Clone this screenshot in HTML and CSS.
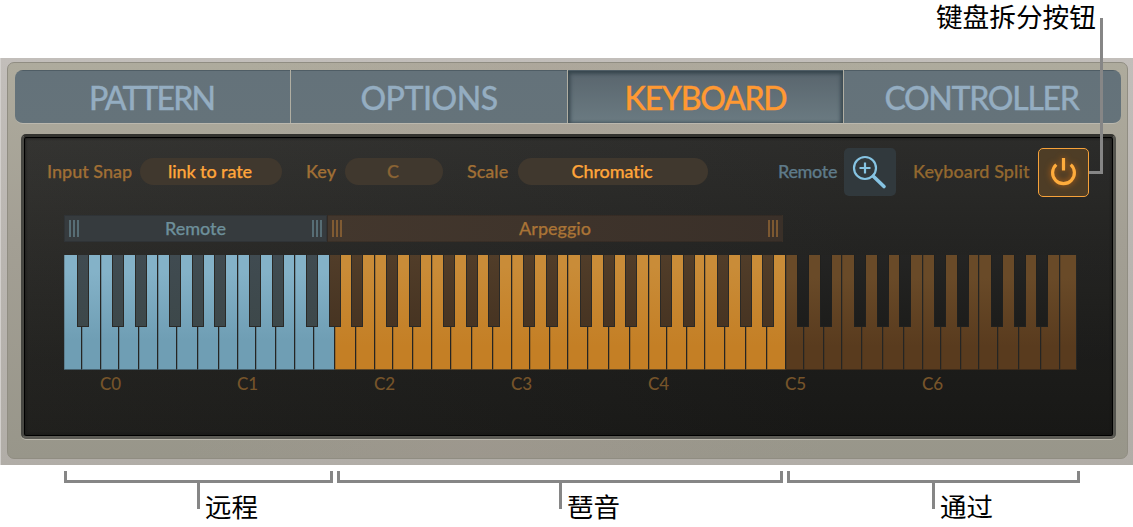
FILE: index.html
```
<!DOCTYPE html>
<html lang="zh-CN">
<head>
    <meta charset="UTF-8">
    <meta name="viewport" content="width=device-width, initial-scale=1.0">
    <title>Arpeggiator - Keyboard</title>
    <link rel="stylesheet" href="styles.css">
</head>
<body>
    <header class="top-note">键盘拆分按钮</header>

    <main class="plugin">
        <div class="panel">
            <nav class="tabs">
                <a class="tab pattern">PATTERN</a>
                <a class="tab options">OPTIONS</a>
                <a class="tab keyboard-tab active">KEYBOARD</a>
                <a class="tab controller">CONTROLLER</a>
            </nav>

            <section class="screen">
                <div class="controls">
                    <span class="label snap">Input Snap</span>
                    <span class="value rate on">link to rate</span>
                    <span class="label key-label">Key</span>
                    <span class="value key-value">C</span>
                    <span class="label scale">Scale</span>
                    <span class="value chromatic on">Chromatic</span>
                    <span class="label remote">Remote</span>
                    <button class="btn btn-zoom">
                        <svg width="52" height="48" viewBox="0 0 52 48" fill="none" stroke="#86c4e3">
                            <circle cx="21" cy="20" r="11" stroke-width="2.200"/>
                            <path d="M21 14.500v11M15.500 20h11" stroke-width="2.200"/>
                            <path d="M29.300 28.200L40 38.500" stroke-width="3.600" stroke-linecap="round"/>
                        </svg>
                    </button>
                    <span class="label split">Keyboard Split</span>
                    <button class="btn btn-power">
                        <svg width="49" height="47" viewBox="0 0 49 47" fill="none" stroke="#ffac3c">
                            <path d="M17.300 15.600A10.900 10.900 0 1 0 31.700 15.600" stroke-width="3.200"/>
                            <path d="M24.500 9v12.500" stroke-width="3.200"/>
                        </svg>
                    </button>
                </div>

                <div class="ranges">
                    <div class="range range-remote"><i class="grip"></i><span>Remote</span><i class="grip"></i></div>
                    <div class="range range-arp"><i class="grip"></i><span>Arpeggio</span><i class="grip"></i></div>
                </div>

                <div class="keys" id="keys"></div>

                <div class="octaves">
                    <span>C0</span><span>C1</span><span>C2</span><span>C3</span><span>C4</span><span>C5</span><span>C6</span>
                </div>
            </section>
        </div>
    </main>

    <footer class="notes">
        <div class="note note-remote"><span>远程</span></div>
        <div class="note note-arp"><span>琶音</span></div>
        <div class="note note-thru"><span>通过</span></div>
    </footer>

    <div class="pointer"></div>

    <script src="keys.js"></script>
</body>
</html>
```
FILE: keys.js
```
// key edges inside one octave, C to C
const OCTAVE = 137;
const whites = [0, 18.5, 38.4, 56.6, 75.7, 96.7, 118.2, 137];
const blacks = [11, 33.5, 68, 91, 113];
const firstC = 37;
const total = 1013;

const keys = document.getElementById('keys');

function zone(x) {
    if (x < 264) return 'remote-key';
    if (x < 721) return 'arp-key';
    return 'thru-key';
}

function addKey(type, left, right) {
    const key = document.createElement('div');
    key.className = type + ' ' + zone(left);
    key.style.width = (right - left) + 'px';
    if (type === 'black') {
        key.style.left = left + 'px';
    }
    keys.appendChild(key);
}

for (let oct = -1; oct < 8; oct++) {
    const start = firstC + oct * OCTAVE;
    for (let i = 0; i < 7; i++) {
        const left = Math.max(start + whites[i], 0);
        const right = Math.min(start + whites[i + 1], total);
        if (right - left > 10 && start + whites[i] > -5) addKey('white', left, right);
    }
    blacks.forEach(function (b) {
        if (start + b > 0 && start + b < total - 20) addKey('black', start + b, start + b + 12);
    });
}
```
FILE: styles.css
```
* {
    box-sizing: border-box;
}
body {
    margin: 0;
    width: 1133px;
    height: 527px;
    position: relative;
    overflow: hidden;
    background: #fff;
    font-family: Lato, "Noto Sans CJK SC", sans-serif;
    font-weight: 500;
    font-variant-ligatures: none;
    display: flex;
    flex-direction: column;
}
.top-note {
    height: 58px;
    padding: 0 37px 0 0;
    text-align: right;
    font: 26.700px/31px "Noto Sans CJK SC", sans-serif;
    color: #000;
}
.plugin {
    height: 407px;
    padding: 4px 5px 6px 6px;
    background: linear-gradient(#c2beba, #b9b5b0 50%, #b1ada7);
    border-left: 1px solid #d2cfcc;
    margin-bottom: 6px;
}
.panel {
    height: 397px;
    padding: 7px 6px 0 7px;
    border: 1px solid #908d82;
    border-radius: 7px;
    background: linear-gradient(100deg, rgba(255,255,255,.0) 20%, rgba(170,155,150,.25) 45%, rgba(255,255,255,0) 75%), linear-gradient(#aeab9d, #a39f94 45%, #98968a);
}
.tabs {
    display: grid;
    grid-template-columns: 275px 276px 275px 277px;
    gap: 1px;
    height: 54px;
    width: 1106px;
    border-radius: 8px;
    overflow: hidden;
    background: #b0aea2;
    border-bottom: 1px solid #bbb8ae;
}
.tab {
    background: linear-gradient(#64727a, #65737a);
    border-top: 1px solid #4f5d65;
    border-bottom: 1px solid #59666c;
    color: #94adc1;
    font-size: 32px;
    line-height: 53px;
    text-align: center;
    white-space: nowrap;
    -webkit-text-stroke: .3px currentColor;
}
.pattern { letter-spacing: -1.900px; padding-right: 2px; }
.options { letter-spacing: -.500px; }
.keyboard-tab { letter-spacing: -1.300px; }
.controller { letter-spacing: -1.300px; padding-right: 2px; }
.tab.active {
    background: linear-gradient(#59656d, #6b7b82);
    box-shadow: inset 0 2px 4px #35454c, inset 2px 0 4px #404e56, inset -2px 0 4px #404e56;
    color: #ff9932;
}
.screen {
    margin: 10px 0 0 6px;
    width: 1095px;
    height: 305px;
    padding: 10px 0 0 23px;
    border: 3px solid #474742;
    border-top-color: #33332f;
    border-right-color: #55554f;
    border-bottom-color: #5c5b55;
    border-radius: 5px;
    background: linear-gradient(100deg, rgba(60,58,52,.15), rgba(0,0,0,.14) 75%), linear-gradient(#333331, #20201e 75%, #1c1c1a);
    box-shadow: inset 0 0 0 1px #000, inset 0 0 3px 1px #141413, 0 1px 0 #bbb8ad;
}
.controls {
    display: grid;
    grid-template-columns: 93px 142px 24px 39px 98px 24px 51px 190px 70px 66px 52px 17px 125px 51px;
    align-items: center;
    height: 50px;
}
.value, .label, .btn {
    grid-row: 1;
}
.label, .value, .range {
    -webkit-text-stroke: .25px currentColor;
}
.label {
    font-size: 18px;
    line-height: 26px;
    padding-bottom: 2px;
    color: #a06f35;
    white-space: nowrap;
}
.snap { grid-column: 1; }
.rate { grid-column: 2; }
.key-label { grid-column: 4; }
.key-value { grid-column: 5; }
.scale { grid-column: 7; }
.chromatic { grid-column: 8; }
.remote { grid-column: 10; color: #5e7a89; letter-spacing: -.350px; }
.btn-zoom { grid-column: 11; }
.split { grid-column: 13; color: #93682f; letter-spacing: .1px; }
.value {
    height: 27px;
    margin-top: -1px;
    padding-right: 2px;
    border-radius: 14px;
    background: #40382e;
    color: #8b6434;
    font-size: 18px;
    line-height: 27px;
    text-align: center;
}
.value.on {
    color: #ffa53a;
    letter-spacing: -.100px;
}
.btn {
    padding: 0;
    border: 0;
    height: 48px;
    border-radius: 5px;
    display: block;
}
.btn svg {
    display: block;
}
.btn-zoom {
    background: #31393d;
}
.btn-power {
    grid-column: 14;
    width: 51px;
    height: 49px;
    border: 1.500px solid #f7a23a;
    background: #4e3d26;
}
.btn-power svg {
    filter: drop-shadow(0 0 3px #c06512);
}
.ranges {
    display: flex;
    margin: 18px 0 0 17px;
    width: 719px;
    height: 27px;
}
.range {
    display: flex;
    justify-content: space-between;
    align-items: center;
    padding: 0 4px;
    font-size: 18px;
    border: 1px solid rgba(0,0,0,.12);
}
.range span {
    padding-bottom: 2px;
}
.range-remote {
    width: 263px;
    background: #363b3e;
    color: #6d8f9a;
}
.range-arp {
    width: 456px;
    background: linear-gradient(90deg, #43372d, #3a3029);
    color: #a97336;
}
.grip {
    width: 10px;
    height: 17px;
    opacity: .6;
    background: repeating-linear-gradient(90deg, currentColor 0 2px, transparent 2px 4px);
}
.keys {
    position: relative;
    display: flex;
    margin: 13px 0 0 17px;
    width: 1013px;
    height: 115px;
}
.white {
    flex: none;
    height: 115px;
    border-right: 1px solid #252523;
    border-bottom: 1px solid #604724;
    box-shadow: inset 1px 0 0 rgba(40,36,30,.25);
}
.black {
    position: absolute;
    top: 0;
    height: 72px;
    border: 1px solid #2a2926;
    border-top: 0;
}
.white.remote-key {
    background: linear-gradient(#84b2c8 15%, #6f9eb4 75%);
    border-bottom-color: #46606d;
}
.white.arp-key {
    background: linear-gradient(#c98c38 10%, #c47f25 80%);
}
.white.thru-key {
    background: linear-gradient(#694a28 20%, #593b1e 80%);
    border-bottom-color: #3d2b1a;
}
.black.remote-key {
    background: linear-gradient(#404b51, #3d484a);
}
.black.arp-key {
    background: linear-gradient(#513d29, #473422);
}
.black.thru-key {
    background: linear-gradient(#242423, #1d1d1b);
    border-color: #20201e;
}
.octaves {
    display: grid;
    grid-template-columns: repeat(7, 137px);
    margin: 3px 0 0 53px;
    font-size: 17px;
    line-height: 22px;
    color: #76542a;
}
.notes {
    display: grid;
    grid-template-columns: 269px 447px 294px;
    column-gap: 3px;
    padding-left: 64px;
    font: 26.500px/32px "Noto Sans CJK SC", sans-serif;
    color: #000;
}
.note-arp,
.note-thru {
    margin-left: 1px;
}
.note {
    height: 12px;
    border: 3px solid #868686;
    border-top: 0;
}
.note span {
    display: block;
    width: 70px;
    height: 27px;
    margin: 11px 0 0 130px;
    border-left: 3px solid #868686;
    padding: 8px 0 0 5px;
    white-space: nowrap;
}
.note-arp span {
    margin-left: 219px;
}
.note-thru span {
    margin-left: 142px;
}
.pointer {
    position: absolute;
    left: 1089px;
    top: 18px;
    width: 14px;
    height: 156px;
    border: solid #868686;
    border-width: 0 3px 3px 0;
}
```
